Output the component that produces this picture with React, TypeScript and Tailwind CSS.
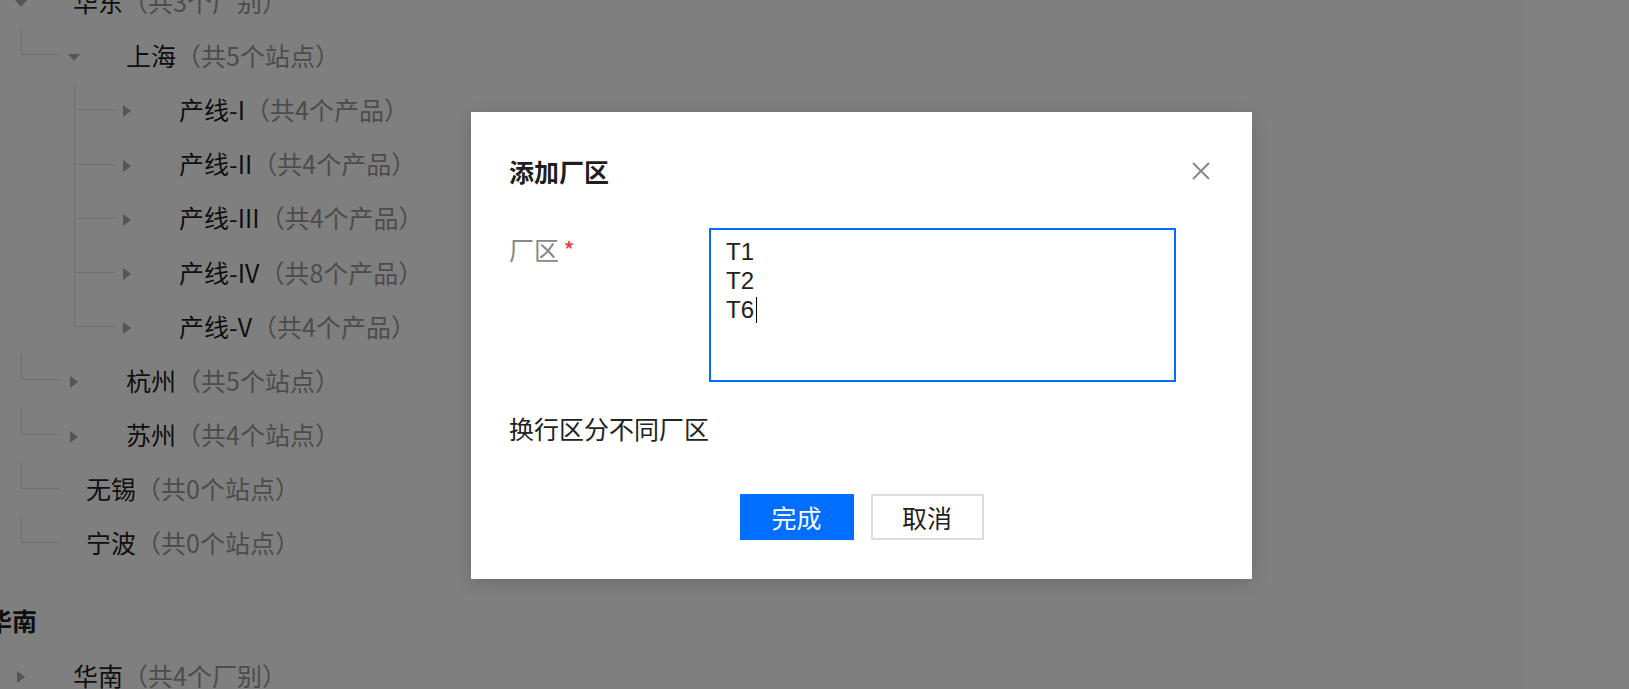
import React from 'react';

type Row = {
  level: 0 | 1 | 2;
  name: string;
  note: string;
  caret?: 'down' | 'right';
  last?: boolean;
};

const rows: Row[] = [
  { level: 0, name: '华东', note: '（共3个厂别）', caret: 'down' },
  { level: 1, name: '上海', note: '（共5个站点）', caret: 'down' },
  { level: 2, name: '产线-I', note: '（共4个产品）', caret: 'right' },
  { level: 2, name: '产线-II', note: '（共4个产品）', caret: 'right' },
  { level: 2, name: '产线-III', note: '（共4个产品）', caret: 'right' },
  { level: 2, name: '产线-IV', note: '（共8个产品）', caret: 'right' },
  { level: 2, name: '产线-V', note: '（共4个产品）', caret: 'right', last: true },
  { level: 1, name: '杭州', note: '（共5个站点）', caret: 'right' },
  { level: 1, name: '苏州', note: '（共4个站点）', caret: 'right' },
  { level: 1, name: '无锡', note: '（共0个站点）' },
  { level: 1, name: '宁波', note: '（共0个站点）' },
];

const font = { fontFamily: '"Noto Sans CJK SC", "Noto Sans", sans-serif' };

function Caret({ dir }: { dir: 'down' | 'right' }) {
  return (
    <div className="w-[16px] flex justify-center items-center shrink-0">
      {dir === 'down' ? (
        <svg width="12" height="7" viewBox="0 0 12 7">
          <path d="M0 0H12L6 7Z" fill="#aaaaaa" />
        </svg>
      ) : (
        <svg width="8" height="12" viewBox="0 0 8 12">
          <path d="M0 0L8 6L0 12Z" fill="#aaaaaa" />
        </svg>
      )}
    </div>
  );
}

function Label({ row }: { row: Row }) {
  return (
    <span className="block whitespace-nowrap leading-[32px] mb-[5px]">
      <span className="text-black/90">{row.name}</span>
      <span className="text-[#999]">{row.note}</span>
    </span>
  );
}

function TreeRow({ row }: { row: Row }) {
  if (row.level === 0) {
    return (
      <div className="flex items-center h-[54.2px] pl-[13px]">
        {row.caret && <Caret dir={row.caret} />}
        <div className="ml-[44px]">
          <Label row={row} />
        </div>
      </div>
    );
  }
  if (row.level === 1) {
    return (
      <div className="flex items-center h-[54.2px] pl-[21px]">
        <div className="self-start mt-[-2px] h-[27px] w-[39px] border-l border-b border-[#dddddd] shrink-0" />
        {row.caret ? (
          <>
            <div className="ml-[6px]">
              <Caret dir={row.caret} />
            </div>
            <div className="ml-[44px]">
              <Label row={row} />
            </div>
          </>
        ) : (
          <div className="ml-[26px]">
            <Label row={row} />
          </div>
        )}
      </div>
    );
  }
  return (
    <div className="flex items-center h-[54.2px] pl-[74px]">
      {row.last ? (
        <div className="self-start h-[26px] w-[41px] border-l border-b border-[#dddddd] shrink-0" />
      ) : (
        <div className="self-stretch w-[41px] border-l border-[#dddddd] shrink-0">
          <div className="h-[26px] border-b border-[#dddddd]" />
        </div>
      )}
      <div className="ml-[4px]">
        <Caret dir={row.caret ?? 'right'} />
      </div>
      <div className="ml-[44px]">
        <Label row={row} />
      </div>
    </div>
  );
}

function Tree() {
  return (
    <div className="mt-[-24px] text-[25px]" style={font}>
      {rows.map((r, i) => (
        <TreeRow key={i} row={r} />
      ))}
      <div className="mt-[22px] h-[56px] flex items-center ml-[-13px]">
        <span className="block font-bold text-black/90 leading-[32px] mb-[5px]">华南</span>
      </div>
      <TreeRow row={{ level: 0, name: '华南', note: '（共4个厂别）', caret: 'right' }} />
    </div>
  );
}

function AddZoneDialog() {
  return (
    <div
      className="w-[781px] bg-white pt-[43px] pb-[39px] px-[38px] shadow-[0_4px_16px_rgba(0,0,0,0.15)] text-[25px]"
      style={font}
    >
      <div className="flex items-center justify-between h-[32px]">
        <h2 className="font-bold text-black/90 leading-[32px]">添加厂区</h2>
        <button className="mr-[4px] w-[18px] h-[18px] flex items-center justify-center" aria-label="关闭">
          <svg width="18" height="18" viewBox="0 0 18 18">
            <path d="M1 1L17 17M17 1L1 17" stroke="#888888" strokeWidth="2" />
          </svg>
        </button>
      </div>

      <div className="mt-[41px] flex">
        <div className="w-[200px] pt-[5px] leading-[32px] text-[#888] shrink-0">
          厂区
          <span className="ml-[5px] text-[20px] font-bold text-[#e54545] align-top">*</span>
        </div>
        <div
          className="w-[467px] h-[154px] border-2 border-[#006eff] px-[15px] pt-[7px] text-[24px] leading-[29px] text-[#222]"
          style={{ fontFamily: '"Liberation Sans", Arial, sans-serif' }}
        >
          <div>T1</div>
          <div>T2</div>
          <div className="flex items-center">
            T6
            <span className="ml-[2px] inline-block w-[1px] h-[26px] bg-black" />
          </div>
        </div>
      </div>

      <p className="mt-[30px] leading-[32px] text-[#222]">换行区分不同厂区</p>

      <div className="mt-[50px] flex justify-center gap-[17px]">
        <button className="w-[114px] h-[46px] bg-[#006eff] text-white leading-none">完成</button>
        <button className="w-[113px] h-[46px] border-2 border-[#dddddd] bg-white text-black/90 leading-none">
          取消
        </button>
      </div>
    </div>
  );
}

export default function App() {
  return (
    <div className="relative w-[1629px] h-[689px] overflow-hidden bg-white">
      <Tree />
      <div className="absolute inset-0 bg-black/50 flex items-center justify-center pl-[94px] pt-[2px]">
        <AddZoneDialog />
      </div>
    </div>
  );
}
